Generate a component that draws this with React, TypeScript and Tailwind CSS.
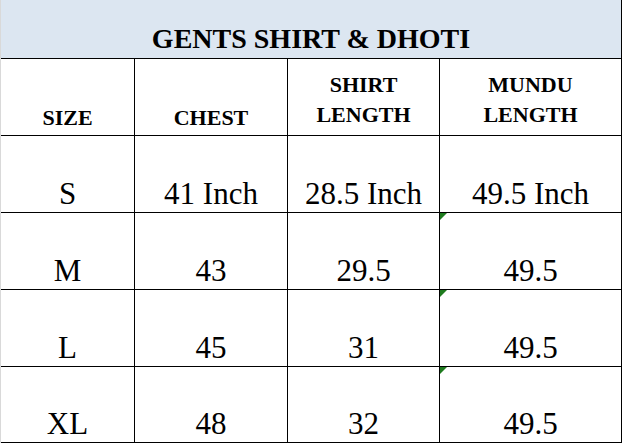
import React from "react";

const rows: { size: string; chest: string; shirt: string; mundu: string; flag: boolean }[] = [
  { size: "S", chest: "41 Inch", shirt: "28.5 Inch", mundu: "49.5 Inch", flag: false },
  { size: "M", chest: "43", shirt: "29.5", mundu: "49.5", flag: true },
  { size: "L", chest: "45", shirt: "31", mundu: "49.5", flag: true },
  { size: "XL", chest: "48", shirt: "32", mundu: "49.5", flag: true },
];

function Flag() {
  return (
    <div className="absolute left-0 top-0 w-[7px] h-[7px] bg-[#1e7b1e] [clip-path:polygon(0_0,100%_0,0_100%)]" />
  );
}

export default function App() {
  return (
    <div className="flex w-[623px] h-[443px] bg-white text-black font-['Liberation_Serif','Times_New_Roman','DejaVu_Serif',serif]">
      <div className="w-px bg-[#d9d9d9]" />
      <div className="flex flex-col w-[621px] border-r border-black">
        <div className="h-[59px] bg-[#dce6f1] border-b border-black flex items-end justify-center pb-[5px]">
          <span className="text-[28px] leading-none font-bold">GENTS SHIRT &amp; DHOTI</span>
        </div>
        <div className="grid grid-cols-[134px_153px_152px_181px] h-[77px] border-b border-black text-[22px] font-bold">
          <div className="border-r border-black flex items-end justify-center pb-[6px] leading-none">SIZE</div>
          <div className="border-r border-black flex items-end justify-center pb-[6px] leading-none">CHEST</div>
          <div className="border-r border-black flex flex-col items-center justify-end pb-[5px] leading-[30px]">
            <span>SHIRT</span>
            <span>LENGTH</span>
          </div>
          <div className="flex flex-col items-center justify-end pb-[5px] leading-[30px]">
            <span>MUNDU</span>
            <span>LENGTH</span>
          </div>
        </div>
        {rows.map((r, i) => (
          <div
            key={r.size}
            className={
              i === rows.length - 1
                ? "grid grid-cols-[134px_153px_152px_181px] h-[76px] border-b border-black text-[31px] leading-none"
                : "grid grid-cols-[134px_153px_152px_181px] h-[77px] border-b border-black text-[31px] leading-none"
            }
          >
            <div className="border-r border-black flex items-end justify-center pb-[3px]">{r.size}</div>
            <div className="border-r border-black flex items-end justify-center pb-[3px]">{r.chest}</div>
            <div className="border-r border-black flex items-end justify-center pb-[3px]">{r.shirt}</div>
            <div className="relative flex items-end justify-center pb-[3px]">
              {r.flag && <Flag />}
              {r.mundu}
            </div>
          </div>
        ))}
      </div>
      <div className="w-px bg-white" />
    </div>
  );
}
